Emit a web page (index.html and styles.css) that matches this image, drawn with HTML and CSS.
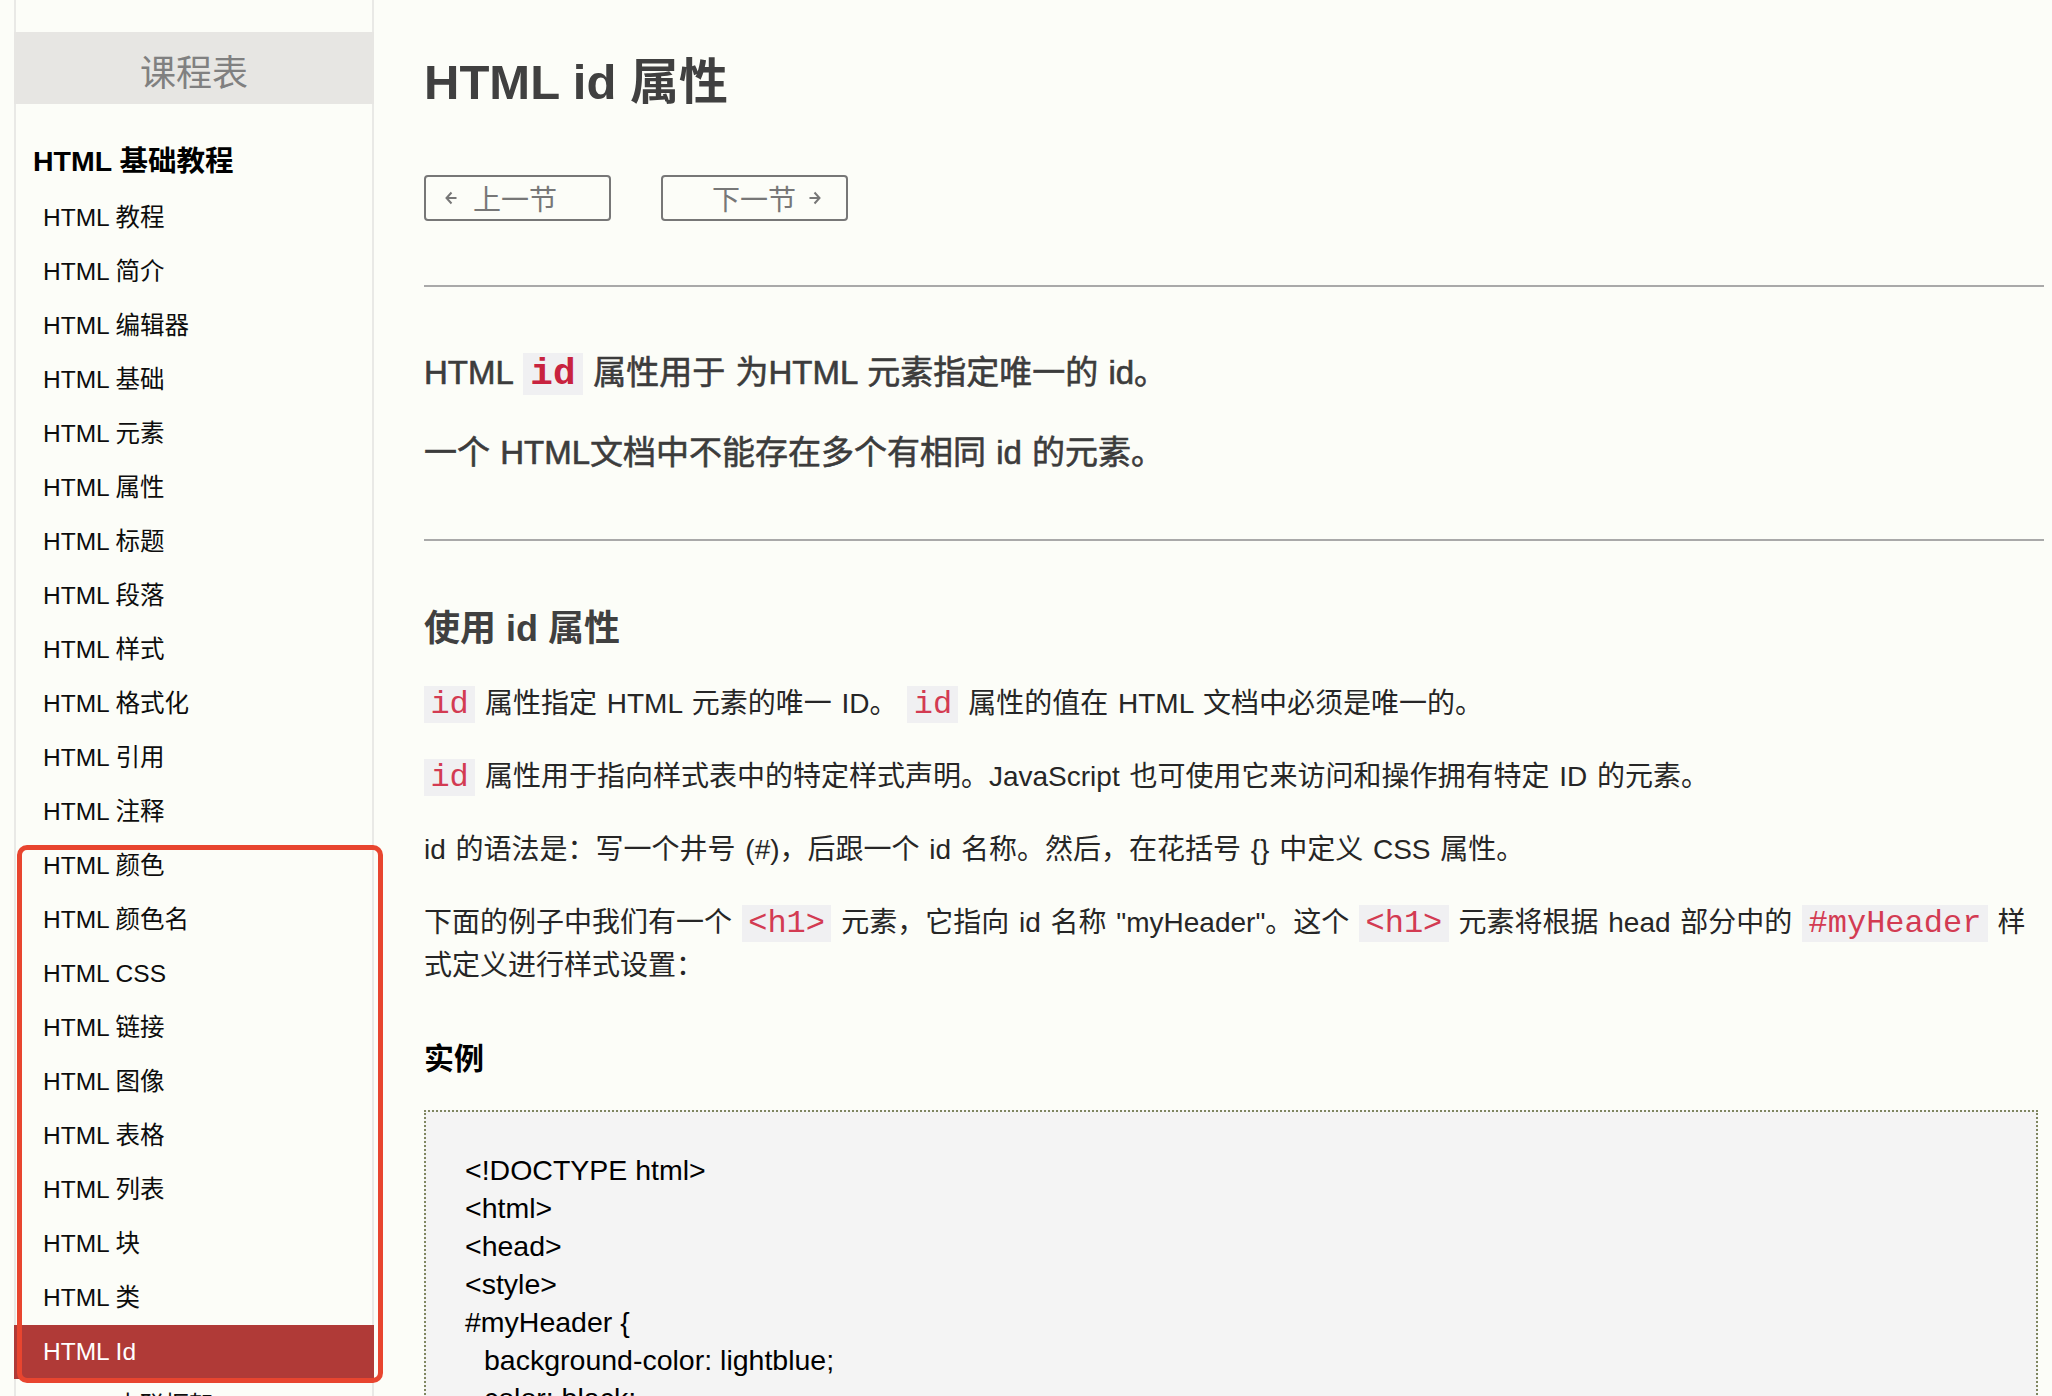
FILE: index.html
```html
<!DOCTYPE html>
<html lang="zh-CN">
<head>
<meta charset="utf-8">
<title>HTML id 属性</title>
<link rel="stylesheet" href="styles.css">
</head>
<body>
<div class="page">
  <aside class="sidebar">
    <div class="side-title">课程表</div>
    <h2 class="side-group">HTML 基础教程</h2>
    <ul class="side-list">
      <li>HTML 教程</li>
      <li>HTML 简介</li>
      <li>HTML 编辑器</li>
      <li>HTML 基础</li>
      <li>HTML 元素</li>
      <li>HTML 属性</li>
      <li>HTML 标题</li>
      <li>HTML 段落</li>
      <li>HTML 样式</li>
      <li>HTML 格式化</li>
      <li>HTML 引用</li>
      <li>HTML 注释</li>
      <li>HTML 颜色</li>
      <li>HTML 颜色名</li>
      <li>HTML CSS</li>
      <li>HTML 链接</li>
      <li>HTML 图像</li>
      <li>HTML 表格</li>
      <li>HTML 列表</li>
      <li>HTML 块</li>
      <li>HTML 类</li>
      <li class="active">HTML Id</li>
      <li>HTML 内联框架</li>
      <li>HTML JavaScript</li>
    </ul>
  </aside>

  <main class="content">
    <h1 class="title">HTML id 属性</h1>

    <div class="pager">
      <a class="pager-btn prev">
        <svg class="arrow" width="12" height="14" viewBox="0 0 12 14"><path d="M6.5 1.5 L1.5 7 L6.5 12.5 M1.5 7 H11.5" fill="none" stroke="#777" stroke-width="2"/></svg>
        <span>上一节</span>
      </a>
      <a class="pager-btn next">
        <span>下一节</span>
        <svg class="arrow" width="12" height="14" viewBox="0 0 12 14"><path d="M5.5 1.5 L10.5 7 L5.5 12.5 M10.5 7 H0.5" fill="none" stroke="#777" stroke-width="2"/></svg>
      </a>
    </div>

    <hr class="rule">

    <div class="intro">
      <p>HTML <code class="inline strong">id</code> 属性用于 为HTML 元素指定唯一的 id。</p>
      <p>一个 HTML文档中不能存在多个有相同 id 的元素。</p>
    </div>

    <hr class="rule">

    <h2 class="section-title">使用 id 属性</h2>
    <p class="text"><code class="inline">id</code> 属性指定 HTML 元素的唯一 ID。 <code class="inline">id</code> 属性的值在 HTML 文档中必须是唯一的。</p>
    <p class="text"><code class="inline">id</code> 属性用于指向样式表中的特定样式声明。JavaScript 也可使用它来访问和操作拥有特定 ID 的元素。</p>
    <p class="text">id 的语法是：写一个井号 (#)，后跟一个 id 名称。然后，在花括号 {} 中定义 CSS 属性。</p>
    <p class="text">下面的例子中我们有一个 <code class="inline">&lt;h1&gt;</code> 元素，它指向 id 名称 "myHeader"。这个 <code class="inline">&lt;h1&gt;</code> 元素将根据 head 部分中的 <code class="inline">#myHeader</code> 样式定义进行样式设置：</p>

    <h3 class="example-title">实例</h3>
    <div class="example">
      <div class="code-line">&lt;!DOCTYPE html&gt;</div>
      <div class="code-line">&lt;html&gt;</div>
      <div class="code-line">&lt;head&gt;</div>
      <div class="code-line">&lt;style&gt;</div>
      <div class="code-line">#myHeader {</div>
      <div class="code-line indent">background-color: lightblue;</div>
      <div class="code-line indent">color: black;</div>
      <div class="code-line indent">padding: 40px;</div>
      <div class="code-line indent">text-align: center;</div>
      <div class="code-line">}</div>
      <div class="code-line">&lt;/style&gt;</div>
    </div>
  </main>
</div>
<div class="annotation"></div>
</body>
</html>
```

FILE: styles.css
```css
* { box-sizing: border-box; }

html { overflow: hidden; }

body {
  margin: 0;
  background: #fcfdf8;
  font-family: "Liberation Sans", "Noto Sans CJK SC", sans-serif;
  color: #333;
}

.page {
  display: flex;
  align-items: flex-start;
  gap: 50px;
  padding-left: 14px;
}

/* ---------- sidebar ---------- */
.sidebar {
  width: 360px;
  flex: none;
  padding-top: 32px;
  min-height: 1500px;
  box-shadow: inset 2px 0 #e9e9e6, inset -2px 0 #e9e9e6;
}

.side-title {
  height: 72px;
  display: flex;
  align-items: center;
  justify-content: center;
  padding-top: 3px;
  background: #e7e6e3;
  font-size: 36px;
  color: #808080;
}

.side-group {
  margin: 37px 0 10px;
  padding-left: 19px;
  font-size: 28.5px;
  line-height: 40px;
  font-weight: bold;
  color: #000;
}

.side-list {
  list-style: none;
  margin: 0;
  padding: 0;
}

.side-list li {
  height: 54px;
  line-height: 54px;
  padding-left: 29px;
  font-size: 24.5px;
  color: #0d0d0d;
  white-space: nowrap;
}

.side-list li.active {
  background: #b03a37;
  color: #fff;
}

.annotation {
  position: absolute;
  left: 17px;
  top: 845px;
  width: 366px;
  height: 538px;
  border: 5px solid #e8452f;
  border-radius: 10px;
  pointer-events: none;
}

/* ---------- content ---------- */
.content {
  flex: 1;
  min-width: 0;
  margin-right: 8px;
  padding-top: 52px;
}

.title {
  margin: 0;
  font-size: 49px;
  line-height: 60px;
  font-weight: bold;
  color: #404040;
}

.pager {
  display: flex;
  gap: 50px;
  margin-top: 63px;
}

.pager-btn {
  width: 187px;
  height: 46px;
  display: flex;
  align-items: center;
  border: 2px solid #777;
  border-radius: 4px;
  font-size: 28px;
  color: #777;
}

.pager-btn.prev {
  padding-left: 19px;
  gap: 16px;
}

.pager-btn.next {
  justify-content: flex-end;
  padding-right: 25px;
  gap: 13px;
}

.arrow { flex: none; }

.rule {
  border: 0;
  height: 2px;
  background: #a9a9a9;
  margin: 64px 0 0;
}

.intro + .rule { margin-top: 0; }

.intro {
  padding: 62px 0;
}

.intro p {
  margin: 0 0 32px;
  font-size: 33px;
  line-height: 48px;
  word-spacing: 1px;
  color: #3c3c3c;
  -webkit-text-stroke: 0.6px currentColor;
}

.intro p:last-child { margin-bottom: 0; }

.section-title {
  margin: 63px 0 28px;
  font-size: 36px;
  line-height: 50px;
  font-weight: bold;
  color: #404040;
}

.text {
  margin: 0 0 30px;
  font-size: 28px;
  line-height: 43px;
  word-spacing: 2px;
  color: #262626;
}

.inline {
  font-family: "Liberation Mono", monospace;
  font-size: 1.143em;
  line-height: 1;
  word-spacing: 0;
  padding: 0 0.2em;
  color: #d33b52;
  background: #f0f0f2;
}

.inline.strong {
  font-weight: bold;
  color: #c8233f;
  -webkit-text-stroke: 0;
}

.example-title {
  margin: 52px 0 31px;
  font-size: 30px;
  line-height: 40px;
  font-weight: bold;
  color: #000;
}

.example {
  margin-right: 6px;
  border: 2px dotted #7f8660;
  background: #f4f4f4;
  padding: 39px 39px 40px;
}

.code-line {
  font-size: 28.5px;
  line-height: 38px;
  color: #000;
  white-space: pre;
}

.code-line.indent { padding-left: 19px; }
```
